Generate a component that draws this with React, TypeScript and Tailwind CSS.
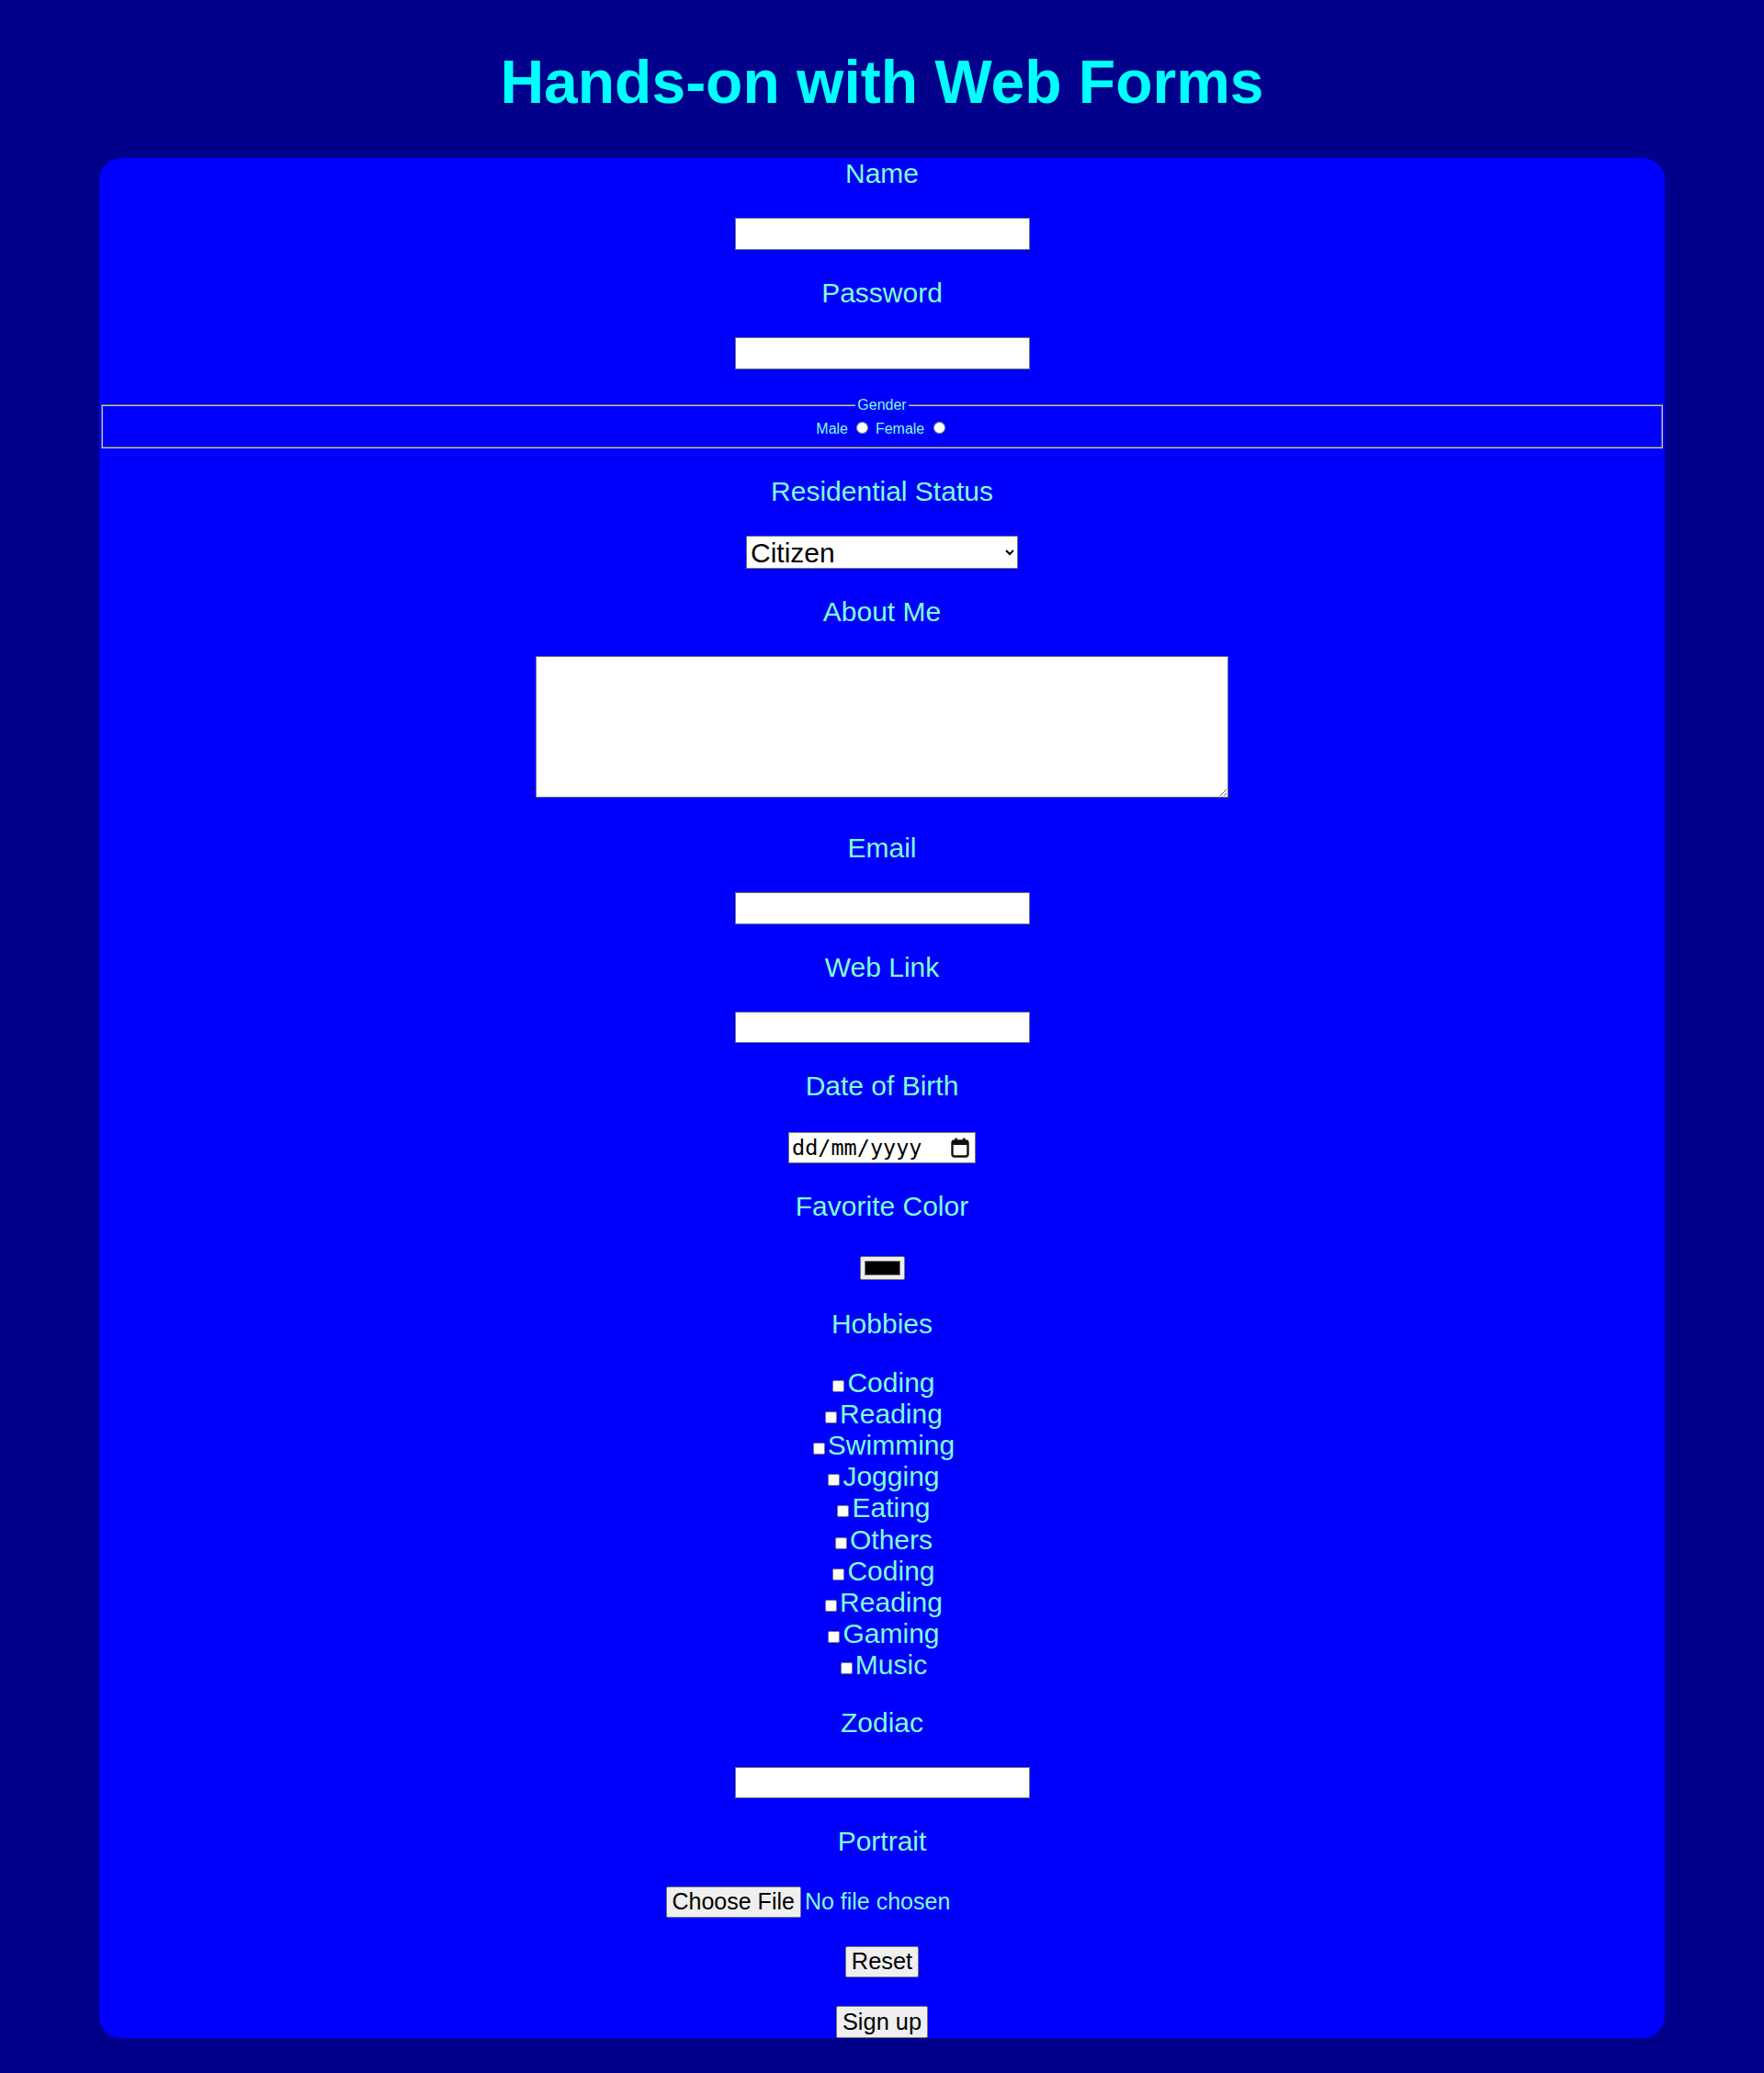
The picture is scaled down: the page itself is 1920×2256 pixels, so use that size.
import React from "react";

const hobbies = [
	"Coding",
	"Reading",
	"Swimming",
	"Jogging",
	"Eating",
	"Others",
	"Coding",
	"Reading",
	"Gaming",
	"Music",
];

function Label({ children, className = "" }: { children: React.ReactNode; className?: string }) {
	return (
		<label className={`block text-[30px] leading-[34.5px] text-[#7fffd4] ${className}`}>
			{children}
		</label>
	);
}

function TextBox({ type = "text", className = "" }: { type?: string; className?: string }) {
	return (
		<input
			type={type}
			className={`block h-[34.5px] w-[321px] border border-[#767676] bg-white px-[2px] text-[25.4px] text-black outline-none ${className}`}
		/>
	);
}

function CalendarIcon() {
	return (
		<svg width="20" height="22" viewBox="0 0 20 22" fill="none">
			<rect x="1.5" y="3.5" width="17" height="17" rx="2.5" stroke="#111" strokeWidth="2.4" />
			<rect x="1.5" y="3.5" width="17" height="4.5" fill="#111" />
			<rect x="4.5" y="0.5" width="2.4" height="4" fill="#111" />
			<rect x="13.1" y="0.5" width="2.4" height="4" fill="#111" />
		</svg>
	);
}

function GreyButton({ children, className = "" }: { children: React.ReactNode; className?: string }) {
	return (
		<button
			type="button"
			className={`h-[34.4px] shrink-0 whitespace-nowrap rounded-[2px] border border-[#767676] bg-[#efefef] px-[6px] leading-[29px] text-black ${className}`}
		>
			{children}
		</button>
	);
}

export default function App() {
	return (
		<div className="min-h-screen bg-[#00008b] p-[8px] font-['Liberation_Sans',Arial,sans-serif]">
			<h1 className="mb-[44px] mt-[44.2px] text-center text-[66px] font-bold leading-[75.9px] text-[#00ffff]">
				Hands-on with Web Forms
			</h1>
			<form className="mx-[100px] flex flex-col items-center rounded-[24px] bg-[#0000ff] text-center">
				<Label>Name</Label>
				<TextBox className="mt-[30.5px]" />

				<Label className="mt-[30px]">Password</Label>
				<TextBox type="password" className="mt-[31px]" />

				<fieldset className="mx-[2px] mt-[30.3px] self-stretch border-2 border-[#c0c0c0] px-[12px] pb-[10px] pt-[5.6px] text-[16px] leading-[18.4px] text-[#7fffd4] [border-style:groove]">
					<legend className="mx-auto px-[2px]">Gender</legend>
					<div>
						<span>Male</span>{" "}
						<input type="radio" name="gender" className="mb-0 ml-[5px] mr-[3px] mt-[3px]" />{" "}
						<span>Female</span>{" "}
						<input type="radio" name="gender" className="mb-0 ml-[5px] mr-[3px] mt-[3px]" />
					</div>
				</fieldset>

				<Label className="mt-[30px]">Residential Status</Label>
				<select className="mt-[30.5px] h-[36px] w-[296px] border border-[#767676] bg-white text-[30px] leading-[34.5px] text-black">
					<option>Citizen</option>
					<option>Resident</option>
					<option>Visitor</option>
				</select>

				<Label className="mt-[30px]">About Me</Label>
				<textarea className="mt-[30.5px] block h-[154px] w-[754px] resize border border-[#767676] bg-white text-black" />

				<Label className="mt-[38px]">Email</Label>
				<TextBox type="email" className="mt-[30.5px]" />

				<Label className="mt-[30px]">Web Link</Label>
				<TextBox type="url" className="mt-[30.5px]" />

				<Label className="mt-[30px]">Date of Birth</Label>
				<div className="mt-[31.8px] flex h-[34px] w-[204px] items-center justify-between border border-[#767676] bg-white pl-[3px] pr-[6px]">
					<span className="font-['DejaVu_Sans_Mono',monospace] text-[23.5px] leading-[28px] text-black">
						dd/mm/yyyy
					</span>
					<CalendarIcon />
				</div>

				<Label className="mt-[30px]">Favorite Color</Label>
				<div className="mt-[36.5px] flex h-[26px] w-[49px] rounded-[2px] border border-[#767676] bg-[#efefef] p-[4px]">
					<div className="flex-1 border border-[#777777] bg-black" />
				</div>

				<Label className="mt-[31.5px]">Hobbies</Label>
				<div className="mt-[29.5px] text-[30px] leading-[34.1px] text-[#7fffd4]">
					{hobbies.map((h, i) => (
						<div key={i}>
							<input type="checkbox" className="mb-0 ml-[4px] mr-[3px] mt-[3px]" />
							{h}
						</div>
					))}
				</div>

				<Label className="mt-[28.5px]">Zodiac</Label>
				<TextBox className="mt-[30.5px]" />

				<Label className="mt-[30.2px]">Portrait</Label>
				<div className="mt-[30.8px] flex w-[471px] items-center">
					<GreyButton className="mr-[4px] text-[25px]">Choose File</GreyButton>
					<span className="whitespace-nowrap text-[25px] leading-[29px] text-[#7fffd4]">No file chosen</span>
				</div>

				<GreyButton className="mt-[30.6px] text-[25.4px]">Reset</GreyButton>
				<GreyButton className="mt-[31.6px] text-[25.4px]">Sign up</GreyButton>
			</form>
		</div>
	);
}
